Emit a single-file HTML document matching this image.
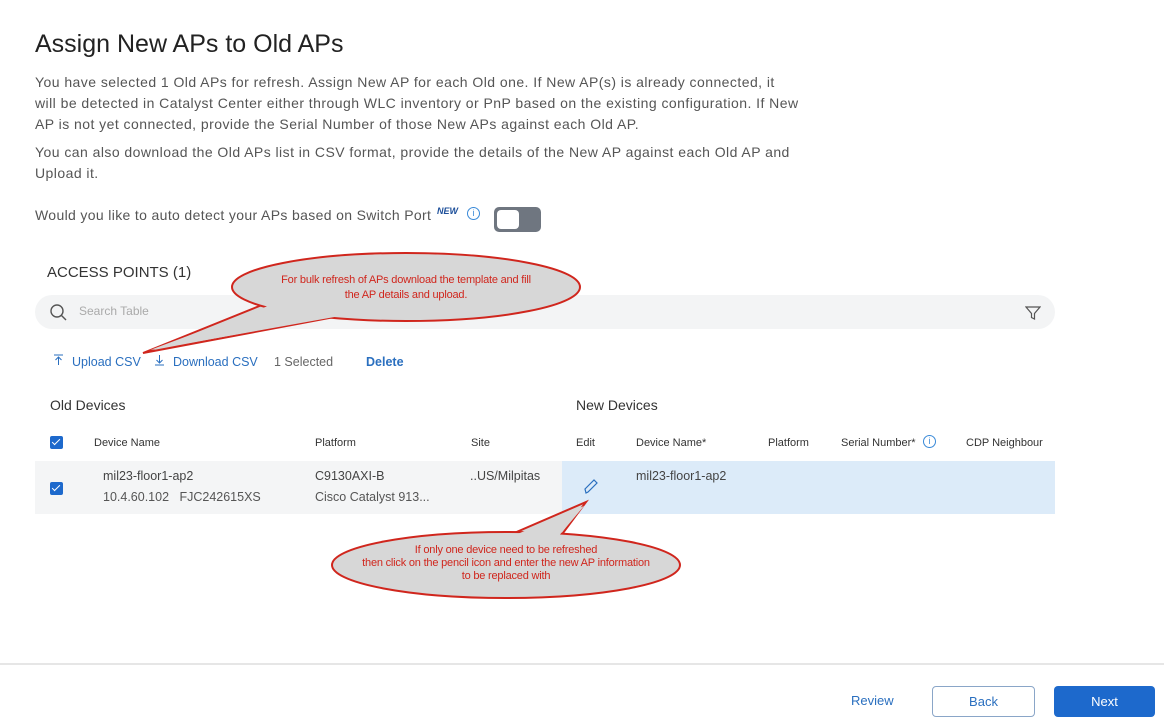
<!DOCTYPE html>
<html><head><meta charset="utf-8"><style>
body{margin:0;width:1164px;height:724px;background:#fff;font-family:"Liberation Sans",sans-serif;position:relative;overflow:hidden;color:#222}
.a{position:absolute;white-space:nowrap}
p.t{position:absolute;left:35px;width:900px;margin:0;font-size:14px;line-height:21px;color:#555;letter-spacing:0.45px;white-space:nowrap}
.hd{font-size:11px;color:#333}
.cb{position:absolute;width:13px;height:13px;background:#1d69cc;border-radius:2px}
.cb:after{content:"";position:absolute;left:4px;top:1px;width:3px;height:7px;border:solid #fff;border-width:0 1.5px 1.5px 0;transform:rotate(45deg)}
.lnk{color:#2a6fbf;font-size:12.5px}
</style></head><body>
<div class="a" style="left:35px;top:30px;font-size:25px;color:#222">Assign New APs to Old APs</div>
<p class="t" style="top:72px">You have selected 1 Old APs for refresh. Assign New AP for each Old one. If New AP(s) is already connected, it<br>will be detected in Catalyst Center either through WLC inventory or PnP based on the existing configuration. If New<br>AP is not yet connected, provide the Serial Number of those New APs against each Old AP.</p>
<p class="t" style="top:142px">You can also download the Old APs list in CSV format, provide the details of the New AP against each Old AP and<br>Upload it.</p>
<div class="a" style="left:35px;top:207px;font-size:14px;color:#555;letter-spacing:0.35px">Would you like to auto detect your APs based on Switch Port</div>
<div class="a" style="left:437px;top:206px;font-size:9px;font-weight:bold;font-style:italic;color:#1d4f9a">NEW</div>
<div class="a" style="left:467px;top:207px;width:11px;height:11px;border:1px solid #3a8ad8;border-radius:50%;font-size:9px;color:#3a8ad8;text-align:center;line-height:11px">i</div>
<div class="a" style="left:494px;top:207px;width:47px;height:25px;background:#6f7680;border-radius:5px"><div style="position:absolute;left:3px;top:3px;width:22px;height:19px;background:#fff;border-radius:4px"></div></div>
<div class="a" style="left:47px;top:264px;font-size:15px;color:#333">ACCESS POINTS (1)</div>
<div class="a" style="left:35px;top:295px;width:1020px;height:34px;background:#f3f4f5;border-radius:17px"></div>
<svg class="a" style="left:48px;top:302px" width="20" height="20"><circle cx="9" cy="9" r="6" fill="none" stroke="#555" stroke-width="1.4"/><line x1="13.5" y1="13.5" x2="18" y2="18" stroke="#555" stroke-width="1.4"/></svg>
<div class="a" style="left:79px;top:304px;font-size:12px;color:#aaa">Search Table</div>
<svg class="a" style="left:1025px;top:305px" width="16" height="16"><path d="M1 2H15L9.5 8.5V14L6.5 12.5V8.5Z" fill="none" stroke="#555" stroke-width="1.2"/></svg>
<svg class="a" style="left:53px;top:354px" width="12" height="12"><path d="M1 1H10M5.5 3V11M2.5 6L5.5 3L8.5 6" fill="none" stroke="#2a6fbf" stroke-width="1"/></svg>
<div class="a lnk" style="left:72px;top:355px">Upload CSV</div>
<svg class="a" style="left:154px;top:354px" width="12" height="12"><path d="M1 11H10M5.5 1V9M2.5 6L5.5 9L8.5 6" fill="none" stroke="#2a6fbf" stroke-width="1"/></svg>
<div class="a lnk" style="left:173px;top:355px">Download CSV</div>
<div class="a" style="left:274px;top:355px;font-size:12.5px;color:#666">1 Selected</div>
<div class="a" style="left:366px;top:355px;font-size:12.5px;color:#2a6fbf;font-weight:bold">Delete</div>
<div class="a" style="left:50px;top:397px;font-size:14px;color:#333">Old Devices</div>
<div class="a" style="left:576px;top:397px;font-size:14px;color:#333">New Devices</div>
<div class="cb" style="left:50px;top:436px"></div>
<div class="a hd" style="left:94px;top:437px">Device Name</div>
<div class="a hd" style="left:315px;top:437px">Platform</div>
<div class="a hd" style="left:471px;top:437px">Site</div>
<div class="a hd" style="left:576px;top:437px">Edit</div>
<div class="a hd" style="left:636px;top:437px">Device Name*</div>
<div class="a hd" style="left:768px;top:437px">Platform</div>
<div class="a hd" style="left:841px;top:437px">Serial Number*</div>
<div class="a" style="left:923px;top:435px;width:11px;height:11px;border:1px solid #3a8ad8;border-radius:50%;font-size:9px;color:#3a8ad8;text-align:center;line-height:11px">i</div>
<div class="a hd" style="left:966px;top:437px">CDP Neighbour</div>
<div class="a" style="left:35px;top:461px;width:1020px;height:53px;background:#f4f5f6"></div>
<div class="a" style="left:562px;top:461px;width:493px;height:53px;background:#dcebf9"></div>
<div class="cb" style="left:50px;top:482px"></div>
<div class="a" style="left:103px;top:469px;font-size:12.5px;color:#444">mil23-floor1-ap2</div>
<div class="a" style="left:103px;top:490px;font-size:12.5px;color:#555">10.4.60.102 &nbsp; FJC242615XS</div>
<div class="a" style="left:315px;top:469px;font-size:12.5px;color:#444">C9130AXI-B</div>
<div class="a" style="left:315px;top:490px;font-size:12.5px;color:#555">Cisco Catalyst 913...</div>
<div class="a" style="left:470px;top:469px;font-size:12.5px;color:#444">..US/Milpitas</div>
<div class="a" style="left:636px;top:469px;font-size:12.5px;color:#444">mil23-floor1-ap2</div>
<svg class="a" style="left:582px;top:478px" width="18" height="18"><path d="M4 15L3 11L12 2L15 5L6 14Z" fill="none" stroke="#2a6fbf" stroke-width="1.2"/></svg>
<svg class="a" style="left:0;top:0" width="1164" height="724">
<path d="M262 305 L143 353 L345 315" fill="#d7d7d7" stroke="#d0261d" stroke-width="2"/>
<ellipse cx="406" cy="287" rx="174" ry="34" fill="#d7d7d7" stroke="#d0261d" stroke-width="2"/>
<path d="M268 306 L150 350 L340 316Z" fill="#d7d7d7"/>
<path d="M505 537 L586 502 L560 537" fill="#d7d7d7" stroke="#d0261d" stroke-width="2"/>
<ellipse cx="506" cy="565" rx="174" ry="33" fill="#d7d7d7" stroke="#d0261d" stroke-width="2"/>
<path d="M508 538 L584 506 L557 538Z" fill="#d7d7d7"/>
</svg>
<div class="a" style="left:256px;top:273px;width:300px;text-align:center;font-size:11px;line-height:15px;color:#d0261d;letter-spacing:-0.2px">For bulk refresh of APs download the template and fill<br>the AP details and upload.</div>
<div class="a" style="left:326px;top:544px;width:360px;text-align:center;font-size:11px;line-height:13px;color:#d0261d;letter-spacing:-0.2px">If only one device need to be refreshed<br>then click on the pencil icon and enter the new AP information<br>to be replaced with</div>
<div class="a" style="left:0;top:663px;width:1164px;height:2px;background:#e6e6e6"></div>
<div class="a" style="left:851px;top:693px;font-size:13px;color:#2a6fbf">Review</div>
<div class="a" style="left:932px;top:686px;width:101px;height:29px;border:1px solid #8aa6c8;border-radius:4px;text-align:center;line-height:29px;font-size:13px;color:#2a6fbf">Back</div>
<div class="a" style="left:1054px;top:686px;width:101px;height:31px;background:#1d69cc;border-radius:4px;text-align:center;line-height:31px;font-size:13px;color:#fff">Next</div>
</body></html>
